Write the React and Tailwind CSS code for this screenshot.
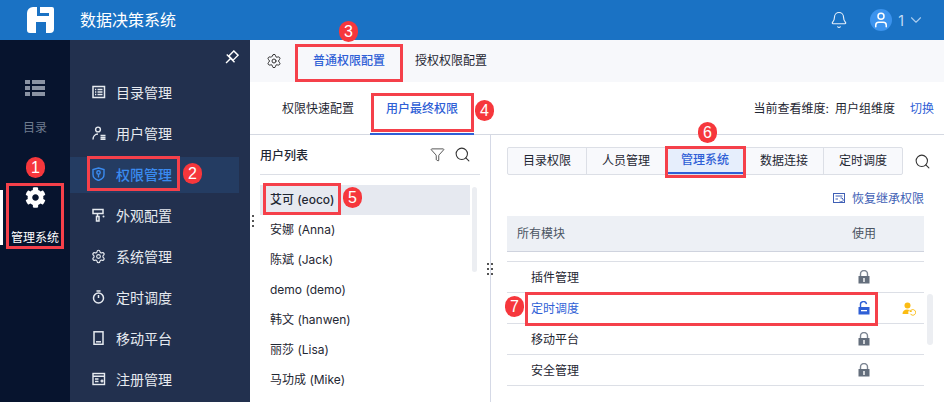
import { Bell, User, ChevronDown, Settings, Search, Funnel } from 'lucide-react'
import { FaCog } from 'react-icons/fa'

const FONT = 'font-["Inter","Noto_Sans_CJK_SC",sans-serif]'

function Badge({ n, className }) {
  return (
    <div className={`absolute w-[19px] h-[21px] rounded-full bg-[#f6373c] text-white text-[16px] leading-[21px] text-center font-["Liberation_Sans",sans-serif] ${className}`}>
      {n}
    </div>
  )
}

function RedBox({ className }) {
  return <div className={`absolute border-[3px] border-[#f5404a] pointer-events-none ${className}`} />
}

function Logo() {
  return (
    <svg width="28" height="28" viewBox="0 0 28 28" className="mx-[26px] shrink-0">
      <path
        fill="#fff"
        fillRule="evenodd"
        d="M7 1h19a2 2 0 0 1 2 2v20a4 4 0 0 1-4 4h-4V16H10v11H4a3 3 0 0 1-3-3V7a6 6 0 0 1 6-6zM11 1v9h12V7h-9V1z"
      />
    </svg>
  )
}

const MenuIcons = {
  list: (
    <g fill="none" stroke="currentColor" strokeWidth="1.500">
      <rect x="1" y="1.500" width="11.500" height="11" />
      <path d="M3 4.500h1.300M5.500 4.500h5M3 7h1.300M5.500 7h5M3 9.500h1.300M5.500 9.500h5" />
    </g>
  ),
  user: (
    <g fill="none" stroke="currentColor" strokeWidth="1.400">
      <circle cx="6" cy="3.500" r="2.400" />
      <path d="M1 13.500c0-3 2-5.500 5-5.500" />
      <path d="M8.500 9.500h5M8.500 11.500h5M8.500 13.300h5" />
    </g>
  ),
  shield: (
    <g fill="none" stroke="currentColor" strokeWidth="1.400">
      <path d="M6.500 1 12 2.500v5c0 3-2.500 5-5.500 6C3.500 12.500 1 10.500 1 7.500v-5z" />
      <circle cx="6.500" cy="5.500" r="1.700" />
      <path d="M6.500 7.200v3.300" />
    </g>
  ),
  brush: (
    <g fill="none" stroke="currentColor" strokeWidth="1.500">
      <path d="M1 1.500h10v4H1z" />
      <path d="M5.500 6v2.500M4.500 8.500h2.500V13H4.500z" />
      <circle cx="11.500" cy="8.500" r="1" fill="currentColor" stroke="none" />
    </g>
  ),
  timer: (
    <g fill="none" stroke="currentColor" strokeWidth="1.500">
      <circle cx="6.500" cy="8" r="5" />
      <path d="M4.500.9h4M6.500 5v3" />
    </g>
  ),
  phone: (
    <g fill="none" stroke="currentColor" strokeWidth="1.500">
      <rect x="2" y="0.800" width="9" height="12.500" />
      <path d="M4 10.800h5" />
    </g>
  ),
  reg: (
    <g fill="none" stroke="currentColor" strokeWidth="1.400">
      <rect x="1" y="1.500" width="11.500" height="11" />
      <path d="M1 4.300h11.500M3 7h3.500M3 9.500h3.500M8.500 9h3M10 7.500v3" />
    </g>
  ),
}

function MenuItem({ icon, label, active }) {
  return (
    <div className={`h-[36px] w-[169px] mb-[5px] flex items-center pl-[22px] ${active ? 'bg-[#243c62] text-[#3a8bf0] font-medium' : 'text-[#e6eaf0]'}`}>
      {icon === 'gear' ? (
        <Settings className="w-[15px] h-[15px] -ml-[1px] -mt-[2px] shrink-0" strokeWidth={1.800} />
      ) : (
        <svg width="14" height="14" viewBox="0 0 14 14" className="shrink-0 -mt-[2px]">{MenuIcons[icon]}</svg>
      )}
      <span className="ml-[10px] -mt-[2px] text-[14px]">{label}</span>
    </div>
  )
}

function Lock({ open }) {
  const color = open ? '#2f5fd6' : '#646e7c'
  return (
    <svg width="12" height="14" viewBox="0 0 12 14">
      <path d={open ? 'M2.500 6.500V4a3 3 0 0 1 6-.8' : 'M2.500 7V4a3.500 3.500 0 0 1 7 0v3'} fill="none" stroke={open ? '#2f5fd6' : '#7d8693'} strokeWidth="1.400" />
      <rect x="0.500" y="6" width="11" height="7.500" fill={color} />
      {open
        ? <rect x="3" y="9" width="6" height="1.300" fill="#fff" />
        : <rect x="5.300" y="8" width="1.400" height="4" fill="#fff" />}
    </svg>
  )
}

function InheritIcon() {
  return (
    <svg width="14" height="14" viewBox="0 0 14 14">
      <circle cx="5.500" cy="3.500" r="3" fill="#fbbc13" />
      <path d="M0.500 12c0-3 2-4.500 4.500-4.500 1 0 1.800.2 2.400.6C6.400 9 6 10.500 6.500 12z" fill="#fbbc13" />
      <path d="M8.300 9.200a2.800 2.800 0 1 1 .1 2.600M8 7.800v1.700h1.700" fill="none" stroke="#fbbc13" strokeWidth="1" />
    </svg>
  )
}

function Grip({ className }) {
  return (
    <div className={`absolute grid grid-cols-1 gap-[3px] ${className}`}>
      <div className="w-[2px] h-[2px] bg-[#555]" />
      <div className="w-[2px] h-[2px] bg-[#555]" />
      <div className="w-[2px] h-[2px] bg-[#555]" />
    </div>
  )
}

const users = ['安娜 (Anna)', '陈斌 (Jack)', 'demo (demo)', '韩文 (hanwen)', '丽莎 (Lisa)', '马功成 (Mike)']
const tabs = ['目录权限', '人员管理', '管理系统', '数据连接', '定时调度']
const rows = [
  { label: '插件管理' },
  { label: '定时调度', open: true },
  { label: '移动平台' },
  { label: '安全管理' },
]

export default function App() {
  return (
    <div className={`relative w-[944px] h-[402px] overflow-hidden bg-white text-[12px] text-[#1f2733] ${FONT}`}>
      {/* top bar */}
      <div className="h-[40px] bg-[#1a72c4] flex items-center text-white">
        <Logo />
        <span className="text-[16px]">数据决策系统</span>
        <div className="ml-auto flex items-center">
          <Bell className="w-[18px] h-[18px] text-[#e8f0fa]" strokeWidth={1.500} />
          <div className="ml-[22px] w-[22px] h-[22px] rounded-full bg-[#3b93ee] flex items-center justify-center">
            <User className="w-[18px] h-[18px] text-white" strokeWidth={2} />
          </div>
          <span className="ml-[6px] text-[14px] text-[#c4dcf5]">1</span>
          <ChevronDown className="ml-[3px] mr-[19px] w-[18px] h-[18px] text-[#a9cbee]" strokeWidth={1.500} />
        </div>
      </div>

      <div className="flex h-[362px]">
        {/* icon rail */}
        <div className="w-[70px] bg-[#07142e] relative flex flex-col items-center shrink-0 leading-[16px]">
          <svg width="20" height="16" viewBox="0 0 20 16" className="mt-[40px] fill-[#8a93a3]">
            <rect x="0" y="0" width="5" height="4" />
            <rect x="7" y="0" width="13" height="4" />
            <rect x="0" y="6" width="5" height="4" />
            <rect x="7" y="6" width="13" height="4" />
            <rect x="0" y="12" width="5" height="4" />
            <rect x="7" y="12" width="13" height="4" />
          </svg>
          <span className="mt-[24px] text-[#6f7c8e]">目录</span>
          <FaCog className="mt-[51px] w-[21px] h-[21px] text-white" />
          <span className="mt-[22px] text-white">管理系统</span>
          <div className="absolute left-0 top-[150px] w-[3px] h-[55px] bg-white" />
        </div>

        {/* menu */}
        <div className="w-[180px] bg-[#22304e] shrink-0 flex flex-col relative">
          <svg width="16" height="16" viewBox="0 0 16 16" className="absolute left-[153px] top-[10px]">
            <g fill="none" stroke="#fff" strokeWidth="1.400" transform="rotate(45 8 8)">
              <rect x="5" y="1" width="6" height="7" />
              <path d="M2.500 8.500h11M8 9v6" />
            </g>
          </svg>
          <div className="pt-[35px]">
            <MenuItem icon="list" label="目录管理" />
            <MenuItem icon="user" label="用户管理" />
            <MenuItem icon="shield" label="权限管理" active />
            <MenuItem icon="brush" label="外观配置" />
            <MenuItem icon="gear" label="系统管理" />
            <MenuItem icon="timer" label="定时调度" />
            <MenuItem icon="phone" label="移动平台" />
            <MenuItem icon="reg" label="注册管理" />
          </div>
        </div>

        {/* main */}
        <div className="flex-1 flex flex-col min-w-0">
          <div className="h-[42px] bg-[#f7f8fb] flex items-center shrink-0">
            <Settings className="ml-[16px] w-[16px] h-[16px] text-[#333]" strokeWidth={1.500} />
            <span className="ml-[31px] text-[#2f5fd6] font-medium">普通权限配置</span>
            <span className="ml-[30px]">授权权限配置</span>
          </div>

          <div className="h-[53px] flex items-start border-b border-[#d5d9e2] shrink-0">
            <span className="ml-[32px] mt-[18px]">权限快速配置</span>
            <div className="ml-[16px] w-[104px] h-[53px] pt-[18px] text-center border-b-2 border-[#2f5fd6] text-[#2f5fd6] font-medium">用户最终权限</div>
            <div className="ml-auto mt-[18px] mr-[10px] flex">
              <span>当前查看维度:</span>
              <span className="ml-[6px]">用户组维度</span>
              <span className="ml-[15px] text-[#2f5fd6]">切换</span>
            </div>
          </div>

          <div className="flex-1 flex min-h-0">
            {/* user list */}
            <div className="w-[241px] border-r border-[#d5d9e6] relative shrink-0 px-[10px]">
              <div className="h-[40px] flex items-center border-b border-[#dcdfe6] font-medium">
                <span className="mt-[2px]">用户列表</span>
                <Funnel className="ml-auto w-[15px] h-[15px] text-[#333]" strokeWidth={1.300} />
                <Search className="ml-[9px] mr-[9px] w-[17px] h-[17px] text-[#333]" strokeWidth={1.500} />
              </div>
              <div className="mt-[10px] w-[210px] h-[30px] bg-[#e6e9f0] flex items-center pl-[10px] font-medium">艾可 (eoco)</div>
              {users.map(u => (
                <div key={u} className="h-[30px] w-[210px] flex items-center pl-[10px]">{u}</div>
              ))}
              <div className="absolute left-[222px] top-[52px] w-[5px] h-[85px] rounded bg-[#eceef2]" />
              <Grip className="left-[2px] top-[80px]" />
              <Grip className="left-[237px] top-[128px]" />
              <Grip className="left-[241px] top-[128px]" />
            </div>

            {/* permissions */}
            <div className="flex-1 pl-[16px] relative min-w-0">
              <div className="mt-[12px] h-[28px] flex items-center">
                <div className="flex h-[28px] w-[396px] border border-[#dcdfe6] rounded-[2px] bg-[#f8f9fc]">
                  {tabs.map((t, i) => (
                    <div
                      key={t}
                      className={`flex-1 flex items-center justify-center ${i > 0 ? 'border-l border-[#dcdfe6]' : ''} ${t === '管理系统' ? 'bg-[#e6eefc] text-[#2f5fd6] font-medium border-b-2 border-b-[#2f5fd6]' : ''}`}
                    >
                      {t}
                    </div>
                  ))}
                </div>
                <Search className="ml-[11px] w-[17px] h-[17px] text-[#333]" strokeWidth={1.500} />
              </div>

              <div className="mt-[17px] h-[14px] w-[417px] flex items-center justify-end text-[#3f5fb5]">
                <svg width="12" height="12" viewBox="0 0 12 12" className="mr-[7px]">
                  <g fill="none" stroke="#3f5fb5" strokeWidth="1">
                    <rect x="0.500" y="0.500" width="11" height="9" />
                    <path d="M2.500 3h7M2.500 6h2.500M6.500 8a2 2 0 1 0 1-3" />
                  </g>
                </svg>
                恢复继承权限
              </div>

              <div className="mt-[10px] w-[417px] h-[36px] bg-[#edf0f5] border-b border-[#cfd3de] flex items-center text-[#4a5462]">
                <span className="ml-[10px]">所有模块</span>
                <span className="ml-auto mr-[48px]">使用</span>
              </div>

              <div className="mt-[9px] w-[417px] border-t border-[#dcdfe6]">
                {rows.map(r => (
                  <div key={r.label} className="h-[31px] pt-[1px] border-b border-[#dcdfe6] flex items-center relative">
                    <span className={`ml-[24px] ${r.open ? 'text-[#2f5fd6]' : ''}`}>{r.label}</span>
                    <div className="absolute left-[351px] top-[8px]"><Lock open={r.open} /></div>
                    {r.open && <div className="absolute left-[395px] top-[9px]"><InheritIcon /></div>}
                  </div>
                ))}
              </div>
              <div className="absolute left-[436px] top-[159px] w-[6px] h-[51px] rounded bg-[#eceef2]" />
            </div>
          </div>
        </div>
      </div>

      {/* annotations */}
      <RedBox className="left-[6px] top-[183px] w-[58px] h-[66px]" />
      <RedBox className="left-[87px] top-[156px] w-[93px] h-[35px]" />
      <RedBox className="left-[295px] top-[44px] w-[108px] h-[38px]" />
      <RedBox className="left-[371px] top-[93px] w-[103px] h-[39px]" />
      <RedBox className="left-[263px] top-[183px] w-[78px] h-[32px]" />
      <RedBox className="left-[665px] top-[146px] w-[81px] h-[32px]" />
      <RedBox className="left-[525px] top-[292px] w-[353px] h-[34px]" />
      <Badge n="1" className="left-[26px] top-[157px]" />
      <Badge n="2" className="left-[183px] top-[163px]" />
      <Badge n="3" className="left-[339px] top-[21px]" />
      <Badge n="4" className="left-[475px] top-[100px]" />
      <Badge n="5" className="left-[343px] top-[187px]" />
      <Badge n="6" className="left-[698px] top-[122px]" />
      <Badge n="7" className="left-[505px] top-[296px]" />
    </div>
  )
}
